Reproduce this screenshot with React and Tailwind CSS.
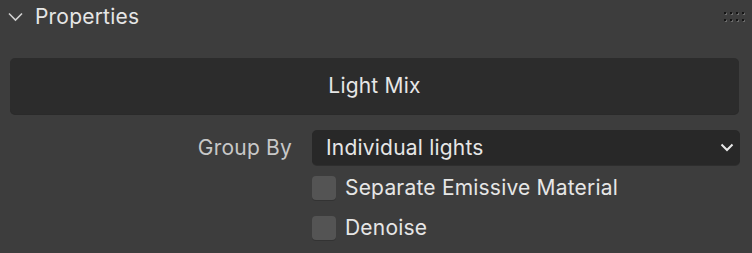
import React from "react";

export default function App() {
  return (
    <div
      className="w-[752px] h-[253px] bg-[#3d3d3d] text-[#e6e6e6] overflow-hidden tracking-[0.2px]"
      style={{ fontFamily: "Inter, 'Noto Sans', sans-serif" }}
    >
      {/* Header */}
      <div className="h-[33px] flex items-center pl-[8px] pr-[8px]">
        <svg width="15" height="10" viewBox="0 0 15 10" className="mr-[12px]">
          <path d="M1 1.5 L7.5 8 L14 1.5" fill="none" stroke="#d0d0d0" strokeWidth="1.6" />
        </svg>
        <span className="text-[21px] leading-none text-[#e6e6e6]">Properties</span>
        <div className="ml-auto grid grid-cols-4 gap-x-[4px] gap-y-[5px] mr-[0px] mt-[0px]">
          {Array.from({ length: 8 }).map((_, i) => (
            <div key={i} className="w-[2px] h-[2px] bg-[#151515] shadow-[1px_1px_0_#6a6a6a]" />
          ))}
        </div>
      </div>

      {/* Light Mix button */}
      <div className="px-[10px] pt-[25px]">
        <div className="h-[56px] rounded-[5px] bg-[#2c2c2c] shadow-[0_1px_0_#2a2a2a] flex items-center justify-center text-[21px] text-[#e6e6e6] mr-[3px]">
          Light Mix
        </div>
      </div>

      {/* Group By */}
      <div className="flex items-center mt-[16px] h-[35px]">
        <div className="w-[292px] text-right text-[21px] text-[#c8c8c8]">Group By</div>
        <div className="ml-[20px] w-[428px] h-[35px] rounded-[5px] bg-[#282828] shadow-[0_1px_0_#2e2e2e] flex items-center pl-[14px] pr-[6px] text-[21px]">
          <span>Individual lights</span>
          <svg width="14" height="9" viewBox="0 0 14 9" className="ml-auto">
            <path d="M1.5 1.5 L7 7 L12.5 1.5" fill="none" stroke="#e8e8e8" strokeWidth="2" />
          </svg>
        </div>
      </div>

      {/* Checkboxes */}
      <div className="ml-[312px] mt-[11px] flex flex-col gap-[16px]">
        {["Separate Emissive Material", "Denoise"].map((t) => (
          <div key={t} className="flex items-center h-[24px]">
            <div className="w-[24px] h-[24px] rounded-[4px] bg-[#545454] shadow-[0_1px_0_#333]" />
            <span className="ml-[9px] text-[21px]">{t}</span>
          </div>
        ))}
      </div>
    </div>
  );
}
